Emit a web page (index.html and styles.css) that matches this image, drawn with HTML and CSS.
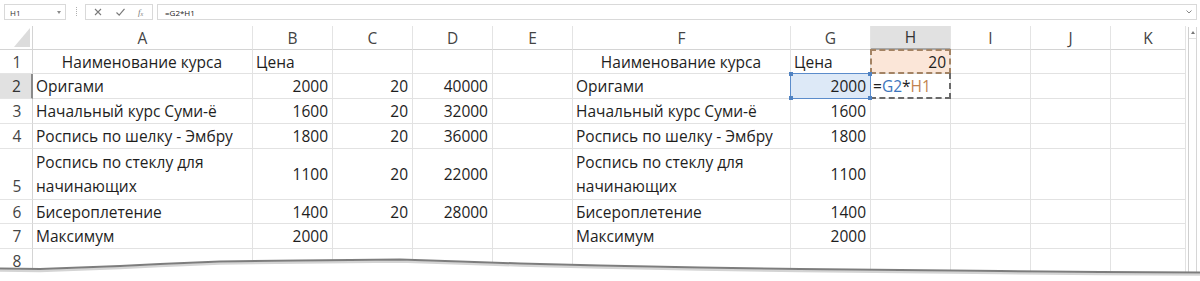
FILE: index.html
```html
<!DOCTYPE html>
<html lang="ru">
<head>
<meta charset="utf-8">
<title>Excel</title>
<link rel="stylesheet" href="styles.css">
</head>
<body>
<div class="app">
  <div class="fbar">
    <div class="namebox"><span>H1</span><span class="dd"></span></div>
    <div class="grip"></div>
    <div class="fxbox">
      <svg class="ico" width="10" height="10" viewBox="0 0 10 10"><path d="M2 2 L8 8 M8 2 L2 8" stroke="#7a7a7a" stroke-width="1.1" fill="none"/></svg>
      <svg class="ico" width="11" height="10" viewBox="0 0 11 10"><path d="M1.5 5.5 L4.2 8.2 L9.5 1.8" stroke="#7a7a7a" stroke-width="1.2" fill="none"/></svg>
      <span class="fx">f<sub>x</sub></span>
    </div>
    <div class="formula"><span class="ftext">=G2*H1</span><svg class="chev" width="8" height="6" viewBox="0 0 8 6"><path d="M1.5 1.5 L4 4 L6.5 1.5" stroke="#888" stroke-width="1" fill="none"/></svg></div>
  </div>

  <div class="sheetwrap">
    <div class="sheet">
      <div class="corner"></div>
      <div class="ch">A</div><div class="ch">B</div><div class="ch">C</div><div class="ch">D</div><div class="ch">E</div><div class="ch">F</div><div class="ch">G</div><div class="ch active">H</div><div class="ch">I</div><div class="ch">J</div><div class="ch">K</div>

      <div class="rh">1</div>
      <div class="c ctr">Наименование курса</div><div class="c">Цена</div><div class="c"></div><div class="c"></div><div class="c"></div>
      <div class="c ctr">Наименование курса</div><div class="c">Цена</div><div class="c r refH">20</div><div class="c"></div><div class="c"></div><div class="c"></div>

      <div class="rh active">2</div>
      <div class="c">Оригами</div><div class="c r">2000</div><div class="c r">20</div><div class="c r">40000</div><div class="c"></div>
      <div class="c">Оригами</div><div class="c r refG">2000<i class="hd tl"></i><i class="hd tr"></i><i class="hd bl"></i><i class="hd br"></i></div><div class="c edit">=<span class="blue">G2</span>*<span class="orange">H1</span></div><div class="c"></div><div class="c"></div><div class="c"></div>

      <div class="rh">3</div>
      <div class="c">Начальный курс Суми-ё</div><div class="c r">1600</div><div class="c r">20</div><div class="c r">32000</div><div class="c"></div>
      <div class="c">Начальный курс Суми-ё</div><div class="c r">1600</div><div class="c"></div><div class="c"></div><div class="c"></div><div class="c"></div>

      <div class="rh">4</div>
      <div class="c">Роспись по шелку - Эмбру</div><div class="c r">1800</div><div class="c r">20</div><div class="c r">36000</div><div class="c"></div>
      <div class="c">Роспись по шелку - Эмбру</div><div class="c r">1800</div><div class="c"></div><div class="c"></div><div class="c"></div><div class="c"></div>

      <div class="rh bottom">5</div>
      <div class="c wrap">Роспись по стеклу для начинающих</div><div class="c r">1100</div><div class="c r">20</div><div class="c r">22000</div><div class="c"></div>
      <div class="c wrap">Роспись по стеклу для начинающих</div><div class="c r">1100</div><div class="c"></div><div class="c"></div><div class="c"></div><div class="c"></div>

      <div class="rh">6</div>
      <div class="c">Бисероплетение</div><div class="c r">1400</div><div class="c r">20</div><div class="c r">28000</div><div class="c"></div>
      <div class="c">Бисероплетение</div><div class="c r">1400</div><div class="c"></div><div class="c"></div><div class="c"></div><div class="c"></div>

      <div class="rh">7</div>
      <div class="c">Максимум</div><div class="c r">2000</div><div class="c"></div><div class="c"></div><div class="c"></div>
      <div class="c">Максимум</div><div class="c r">2000</div><div class="c"></div><div class="c"></div><div class="c"></div><div class="c"></div>

      <div class="rh">8</div>
      <div class="c"></div><div class="c"></div><div class="c"></div><div class="c"></div><div class="c"></div>
      <div class="c"></div><div class="c"></div><div class="c"></div><div class="c"></div><div class="c"></div><div class="c"></div>
    </div>
    <div class="vscroll"><div class="up"></div></div>
  </div>

  <svg class="tear" width="1200" height="31" viewBox="0 0 1200 31">
    <path d="M0 19 L40 19.5 L80 18 L120 16.5 L160 14.5 L220 12 L300 11 L400 10 L460 12 L520 14 L600 16 L700 18 L800 19.5 L900 20.5 L1000 21.5 L1100 22.5 L1200 23 L1200 31 L0 31 Z" fill="#ffffff"/>
    <path d="M0 20.5 L40 21 L80 19.5 L120 18 L160 16 L220 13.5 L300 12.5 L400 11.5 L460 13.5 L520 15.5 L600 17.5 L700 19.5 L800 21 L900 22 L1000 23 L1100 24 L1200 24.5" stroke="#d4d4d4" stroke-width="2.5" fill="none"/>
    <path d="M0 18.5 L40 19 L80 17.5 L120 16 L160 14 L220 11.5 L300 10.5 L400 9.5 L460 11.5 L520 13.5 L600 15.5 L700 17.5 L800 19 L900 20 L1000 21 L1100 22 L1200 22.5" stroke="#7d7d7d" stroke-width="2" fill="none"/>
  </svg>
</div>
</body>
</html>
```
FILE: styles.css
```css
html, body {
  margin: 0;
  padding: 0;
  background: #ffffff;
}
body {
  font-family: "Open Sans", "Noto Sans", sans-serif;
  color: #1e1e1e;
  overflow: hidden;
}
.app {
  width: 1200px;
  height: 281px;
  position: relative;
  overflow: hidden;
}

/* formula bar */
.fbar {
  display: flex;
  align-items: flex-start;
  height: 26px;
  padding: 4px 0 0 4px;
  box-sizing: border-box;
}
.namebox {
  width: 62px;
  height: 16px;
  border: 1px solid #d9d9d9;
  box-sizing: border-box;
  display: flex;
  align-items: center;
  justify-content: space-between;
  padding: 0 4px 0 5px;
  font-size: 8px;
  color: #333;
}
.dd {
  width: 0;
  height: 0;
  border-left: 2.5px solid transparent;
  border-right: 2.5px solid transparent;
  border-top: 3px solid #8a8a8a;
}
.grip {
  width: 0;
  height: 9px;
  margin: 3px 0 0 10px;
  border-left: 1px dotted #b0b0b0;
}
.fxbox {
  width: 68px;
  height: 16px;
  margin-left: 8px;
  border: 1px solid #d9d9d9;
  box-sizing: border-box;
  display: flex;
  align-items: center;
  padding-left: 7px;
  gap: 12px;
}
.ico { display: block; }
.fx {
  font-family: "Liberation Serif", serif;
  font-style: italic;
  font-size: 9px;
  color: #7a7a7a;
  line-height: 1;
}
.fx sub { font-size: 6px; vertical-align: -1px; }
.formula {
  width: 1040px;
  height: 16px;
  margin-left: 4px;
  border: 1px solid #d9d9d9;
  box-sizing: border-box;
  display: flex;
  align-items: center;
  justify-content: space-between;
  padding: 0 3px 0 7px;
  font-size: 8px;
  color: #222;
}

/* sheet */
.sheetwrap {
  display: flex;
  align-items: flex-start;
}
.sheet {
  display: grid;
  grid-template-columns: 33px 220px 80px 80px 80px 80px 218px 80px 80px 80px 80px 75px;
  grid-template-rows: 24px 24px 25px 25px 25px 51px 24px 25px 25px;
  font-size: 15.5px;
}
.corner {
  border-right: 1px solid #d4d4d4;
  border-bottom: 1px solid #d4d4d4;
  box-sizing: border-box;
  position: relative;
}
.corner::after {
  content: "";
  position: absolute;
  right: 2px;
  bottom: 2px;
  width: 0;
  height: 0;
  border-left: 16px solid transparent;
  border-bottom: 19px solid #dcdcdc;
}
.ch {
  display: flex;
  align-items: center;
  justify-content: center;
  color: #444;
  border-right: 1px solid #e4e4e4;
  border-bottom: 1px solid #d4d4d4;
  box-sizing: border-box;
}
.ch.active {
  background: #e1e1e1;
  color: #333;
  border-bottom: 2px solid #a8a8a8;
}
.rh {
  display: flex;
  align-items: center;
  justify-content: center;
  color: #444;
  border-right: 1px solid #d4d4d4;
  border-bottom: 1px solid #e4e4e4;
  box-sizing: border-box;
  padding-left: 2px;
}
.rh.active {
  background: #e1e1e1;
  color: #333;
  border-right: 2px solid #8a8a8a;
}
.rh.bottom {
  align-items: flex-end;
  padding-bottom: 2px;
}
.c {
  display: flex;
  align-items: center;
  padding: 0 4px 0 3px;
  border-right: 1px solid #e2e2e2;
  border-bottom: 1px solid #e2e2e2;
  box-sizing: border-box;
  white-space: nowrap;
  position: relative;
}
.c.r { justify-content: flex-end; }
.c.ctr { justify-content: center; }
.c.wrap {
  white-space: normal;
  line-height: 24px;
}

/* reference highlights */
.refH { background: #fbe6d8; }
.refH::after {
  content: "";
  position: absolute;
  left: -1px;
  top: -1px;
  right: -1px;
  bottom: -1px;
  border: 2px dashed #a38364;
}
.refG { background: #dde9f7; }
.refG::after {
  content: "";
  position: absolute;
  left: -1px;
  top: -1px;
  right: -1px;
  bottom: -1px;
  border: 1px solid #5b8ccb;
}
.hd {
  position: absolute;
  width: 4px;
  height: 4px;
  background: #4f82c2;
  z-index: 2;
}
.hd.tl { left: -2px; top: -2px; }
.hd.tr { right: -2px; top: -2px; }
.hd.bl { left: -2px; bottom: -2px; }
.hd.br { right: -2px; bottom: -2px; }
.edit { padding-left: 2px; }
.edit::after {
  content: "";
  position: absolute;
  left: -1px;
  top: -1px;
  right: -1px;
  bottom: -1px;
  border: 2px dashed #6a6a6a;
  border-top: none;
  border-left: none;
}
.blue { color: #3d76bd; }
.orange { color: #c1834f; }

/* scrollbar */
.vscroll {
  width: 9px;
  height: 255px;
  margin-left: 2px;
  margin-top: 1px;
  border-left: 1px solid #cfcfcf;
  border-right: 1px solid #d6d6d6;
  box-sizing: border-box;
}
.up {
  height: 11px;
  border-bottom: 1px solid #e0e0e0;
  display: flex;
  justify-content: center;
  align-items: center;
  position: relative;
}
.up::after {
  content: "";
  width: 0;
  height: 0;
  border-left: 2.5px solid transparent;
  border-right: 2.5px solid transparent;
  border-bottom: 3px solid #777;
}

/* torn edge overlay */
.tear {
  position: absolute;
  left: 0;
  top: 250px;
  display: block;
}
```
